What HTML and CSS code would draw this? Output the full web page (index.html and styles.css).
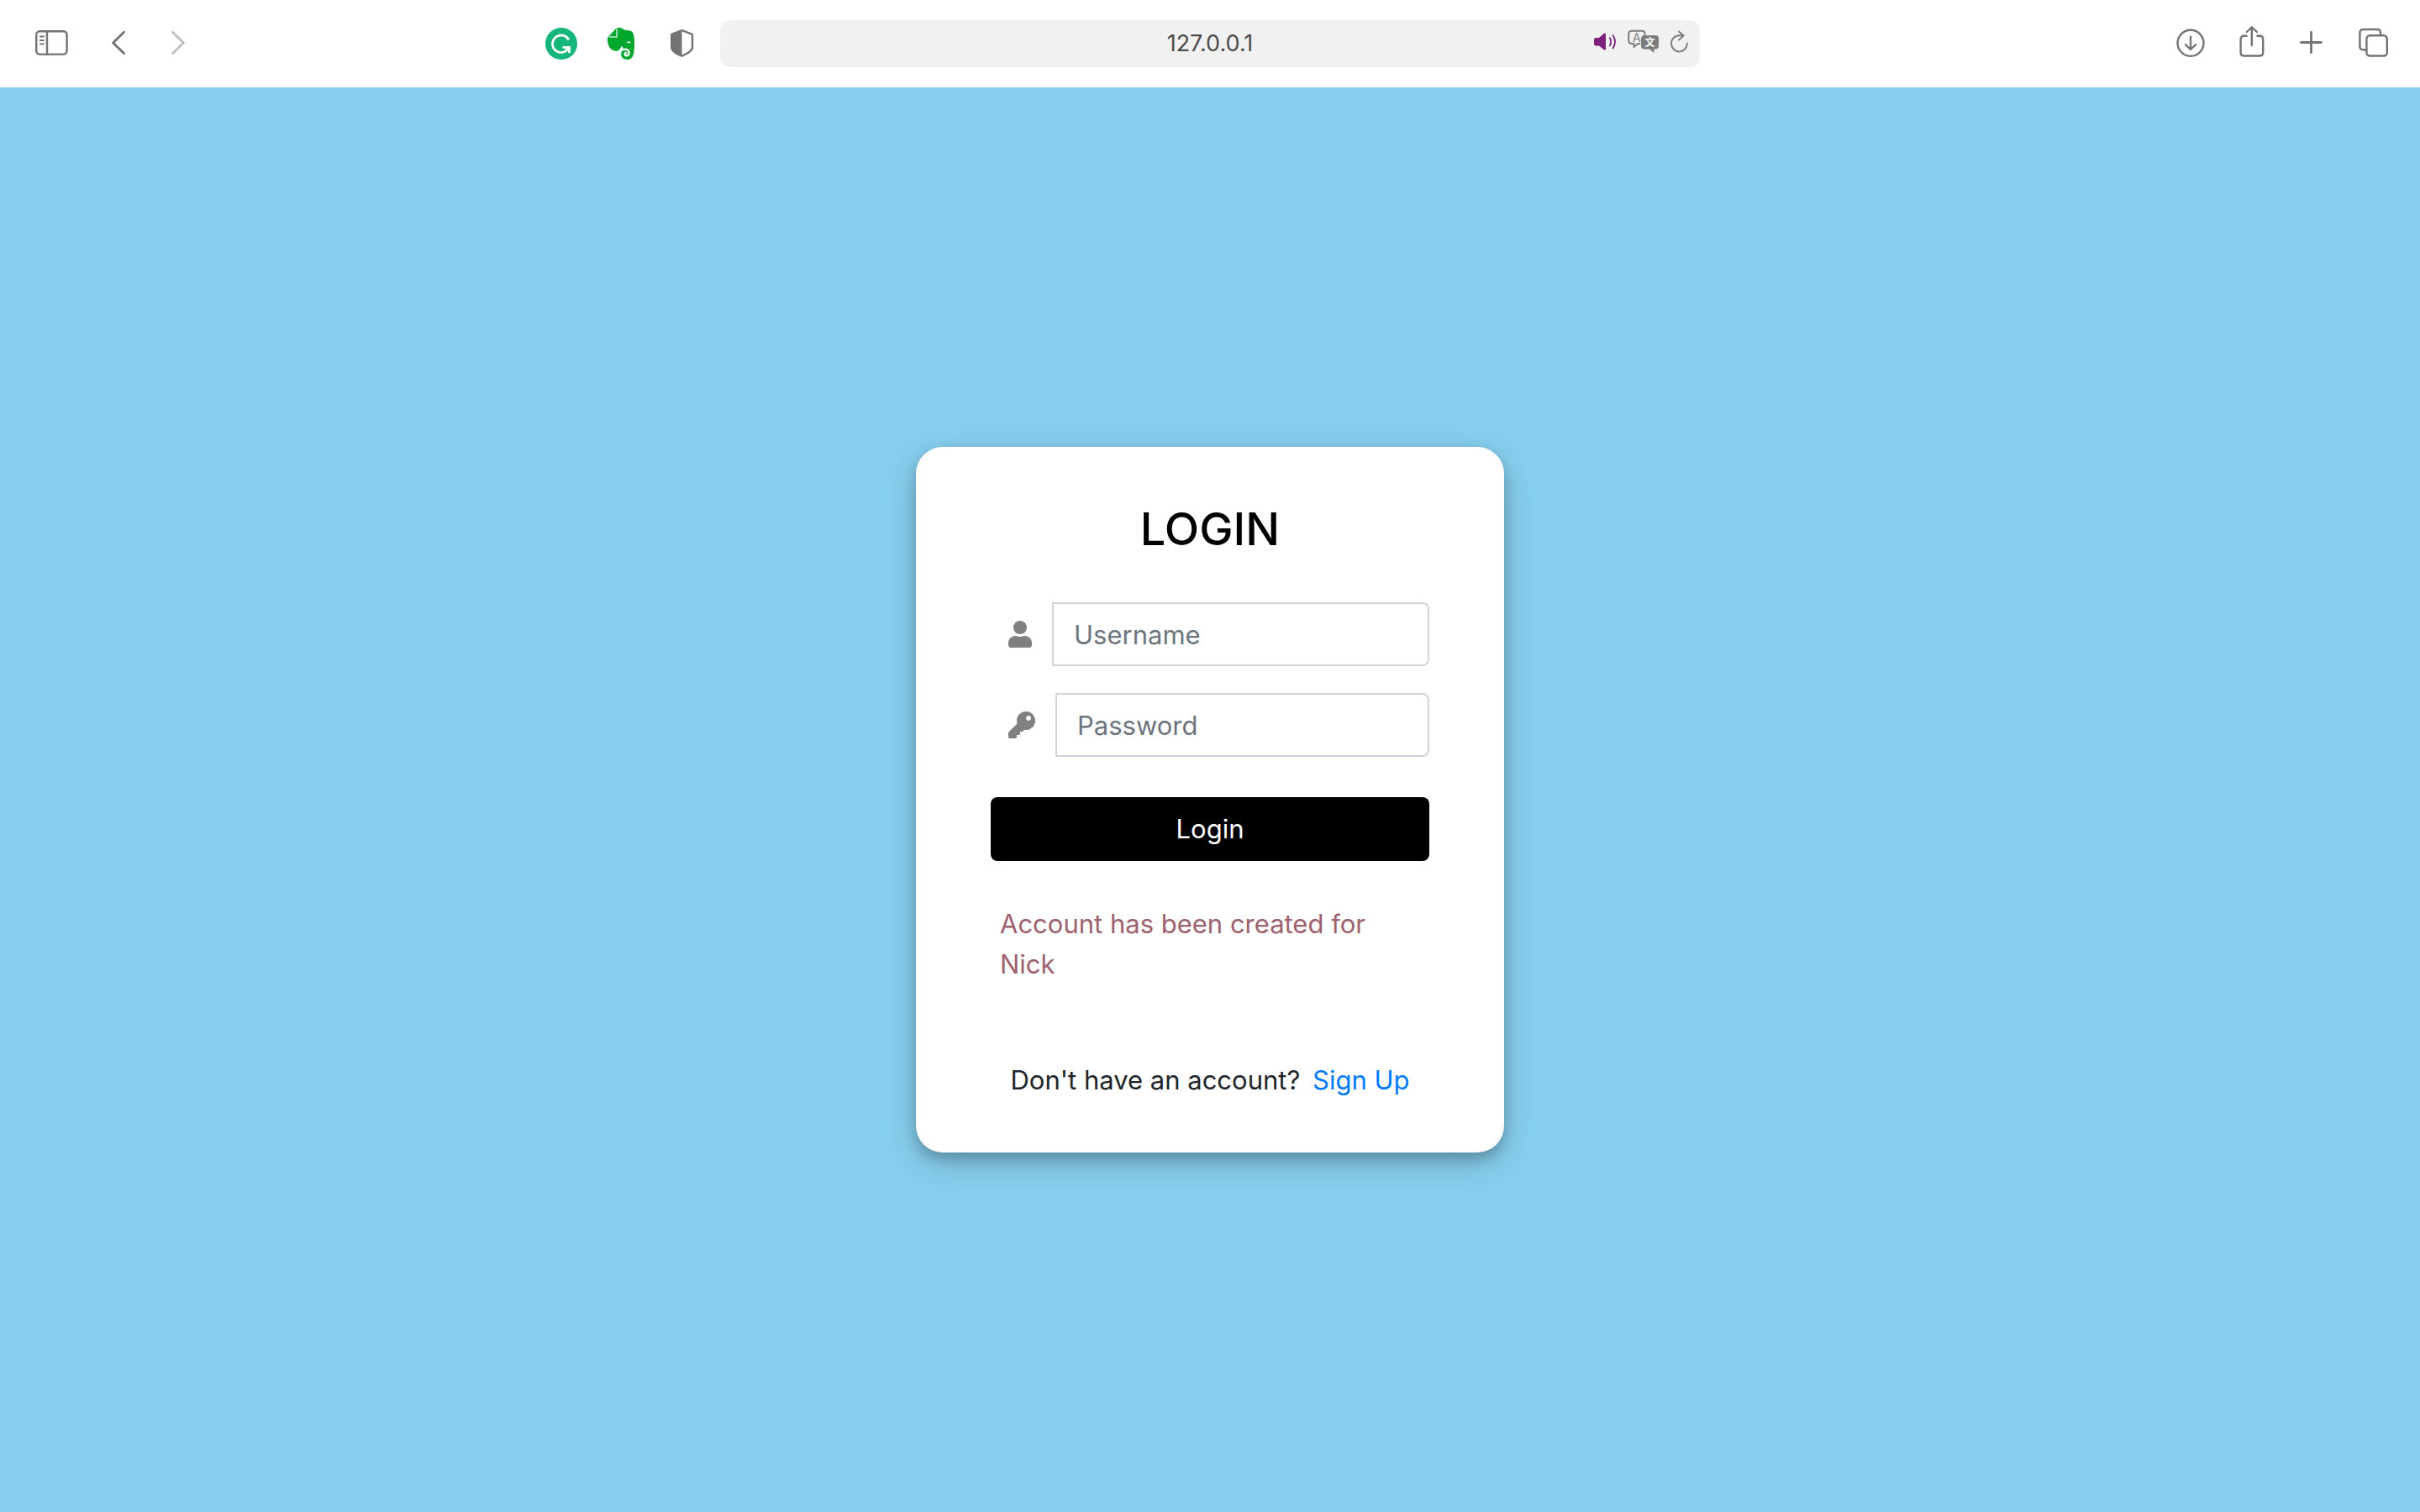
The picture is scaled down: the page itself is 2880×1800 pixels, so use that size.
FILE: index.html
```html
<!DOCTYPE html>
<html lang="en">
<head>
<meta charset="utf-8">
<meta name="viewport" content="width=device-width, initial-scale=1">
<title>Login</title>
<link rel="stylesheet" href="styles.css">
</head>
<body>
<header class="toolbar">
  <div class="toolbar-left">
    <div class="nav-tools">
      <button class="tool" type="button" aria-label="Show sidebar">
        <svg width="40" height="44" viewBox="0 0 40 44" fill="none" stroke="currentColor" stroke-width="2.4" stroke-linecap="round"><rect x="1.2" y="7.2" width="36.4" height="27.4" rx="4"/><path d="M14 7.500V34.500"/><path d="M5.800 13.500H10M5.800 18H10M5.800 22.300H10" stroke-width="1.800"/></svg>
      </button>
      <button class="tool" type="button" aria-label="Back">
        <svg width="20" height="44" viewBox="0 0 20 44" fill="none" stroke="currentColor" stroke-width="2.800" stroke-linecap="round" stroke-linejoin="round"><path d="M15.500 8.200L2.600 21L15.500 33.500"/></svg>
      </button>
      <button class="tool tool-off" type="button" aria-label="Forward" disabled>
        <svg width="20" height="44" viewBox="0 0 20 44" fill="none" stroke="currentColor" stroke-width="2.800" stroke-linecap="round" stroke-linejoin="round"><path d="M3.500 8.200L16.400 21L3.500 33.500"/></svg>
      </button>
    </div>
    <div class="extension-tools">
      <button class="tool" type="button" aria-label="Grammarly">
        <svg width="38" height="44" viewBox="0 0 38 44" fill="none" stroke="#fff" stroke-width="2.800"><circle cx="19" cy="22" r="19" fill="#15b67a" stroke="none"/><path d="M27.800 17.500A10.200 10.200 0 1 0 28 26.500" /><path d="M20.500 26.300H28.500V33" /><path d="M28.500 26.300L24 30.500" /></svg>
      </button>
      <button class="tool" type="button" aria-label="Evernote">
        <svg width="36" height="44" viewBox="0 0 36 44"><path fill="#00a82d" d="M2 15L11.500 4.600C13 3 15.500 2.700 18 3.200C20 3.600 21 5.500 23 5.800C26 6.200 29 5.800 31.500 8C34 12 34.300 18 34 23C33.800 29 33.500 35 31.500 38C29 41.500 24 41.600 20.500 39.500C17.500 37.500 17.500 32.500 20 30L18 26.500C16.500 30 14 31.200 10.500 30.400C6 29.500 3.500 26 2.600 22C2 19 1.700 16.500 2 15Z"/><path fill="none" stroke="#fff" stroke-width="1.500" d="M4 14H13V4.500" opacity=".8"/><path fill="none" stroke="#fff" stroke-width="2.400" stroke-linecap="round" d="M19 26.500C19 29.500 21.500 29 24 28.600C28.500 29 28.600 35.500 25 36.300C22.500 36.500 21.600 33.500 23.800 32.800"/><path fill="#fff" d="M25 20.800C25.200 18.600 29.200 18.600 29.800 21.600Z"/></svg>
      </button>
      <button class="tool" type="button" aria-label="Privacy report">
        <svg width="40" height="44" viewBox="0 0 40 44"><path fill="none" stroke="currentColor" stroke-width="2.400" stroke-linejoin="round" d="M20.500 6.200L33 10.800V26C33 31 27 33.500 20.500 36.700C14 33.500 8.200 31 8.200 26V10.800Z"/><path fill="currentColor" d="M20.500 6.200V36.700C14 33.500 8.200 31 8.200 26V10.800Z"/></svg>
      </button>
    </div>
  </div>
  <div class="address-bar">
    <input class="address" type="text" aria-label="Address" value="127.0.0.1">
    <div class="address-tools">
      <button class="tool tool-audio" type="button" aria-label="Mute tab">
        <svg width="26" height="44" viewBox="0 0 26 44"><path fill="currentColor" d="M2.200 15H6L11.800 9.800Q14 8.600 14 11V28Q14 30.400 11.800 29.200L6 24.500H2.200Q0 24.500 0 22.300V17.200Q0 15 2.200 15Z"/><path fill="none" stroke="currentColor" stroke-width="1.800" stroke-linecap="round" d="M18.800 15.200Q21.400 19.700 18.800 24.200M22.600 12Q27.400 19.700 22.600 27.400"/></svg>
      </button>
      <button class="tool tool-light" type="button" aria-label="Translate">
        <svg width="37" height="44" viewBox="0 0 37 44"><path fill="none" stroke="currentColor" stroke-width="2" stroke-linejoin="round" d="M15 22H12.500L7.500 26V22H5.500Q1.200 22 1.200 17.500V11.200Q1.200 6.800 5.500 6.800H16.500Q20.600 6.800 20.600 11.200V12"/><text class="glyph-latin" x="6" y="19.500">A</text><path fill="currentColor" d="M20 12H33Q37 12 37 16V24.500Q37 28.500 33 28.500H31.500V33L26 28.500H20Q16 28.500 16 24.500V16Q16 12 20 12Z"/><text class="glyph-han" x="20.500" y="25">文</text></svg>
      </button>
      <button class="tool tool-light" type="button" aria-label="Reload">
        <svg width="21" height="44" viewBox="0 0 21 44" fill="none" stroke="currentColor" stroke-width="2" stroke-linecap="round" stroke-linejoin="round"><path d="M19.800 21.500A9.400 9.600 0 1 1 10.400 12.200H15.500"/><path d="M10 7.500L15.500 12.400L10 17.500"/></svg>
      </button>
    </div>
  </div>
  <div class="toolbar-right">
    <button class="tool" type="button" aria-label="Downloads">
      <svg width="36" height="44" viewBox="0 0 36 44" fill="none" stroke="currentColor" stroke-width="2.400" stroke-linecap="round" stroke-linejoin="round"><circle cx="17" cy="21.300" r="15.500"/><path d="M17 13.800V29M11 23.200L17 29L23 23.200"/></svg>
    </button>
    <button class="tool" type="button" aria-label="Share">
      <svg width="36" height="44" viewBox="0 0 36 44" fill="none" stroke="currentColor" stroke-width="2.400" stroke-linecap="round" stroke-linejoin="round"><path d="M12.500 12.800H8.500Q4.600 12.800 4.600 16.800V32.500Q4.600 36.500 8.500 36.500H27.200Q31.200 36.500 31.200 32.500V16.800Q31.200 12.800 27.200 12.800H23.500" stroke-linecap="butt"/><path d="M17.800 24V2.500M11.800 8L17.800 2.300L23.800 8"/></svg>
    </button>
    <button class="tool" type="button" aria-label="New tab">
      <svg width="36" height="44" viewBox="0 0 36 44" fill="none" stroke="currentColor" stroke-width="2.800" stroke-linecap="round"><path d="M4.500 20.500H28.500M16.500 8.500V32.500"/></svg>
    </button>
    <button class="tool" type="button" aria-label="Tab overview">
      <svg width="36" height="44" viewBox="0 0 36 44" fill="none" stroke="currentColor" stroke-width="2.400"><rect x="10.400" y="12.300" width="24.400" height="24.200" rx="4"/><path d="M10 29.300H6.500Q2.400 29.300 2.400 25.300V9Q2.400 5 6.500 5H23Q27 5 27 9V12"/></svg>
    </button>
  </div>
</header>
<main class="page">
  <section class="card">
    <h1 class="title">LOGIN</h1>
    <form class="login-form">
      <div class="field">
        <label class="field-icon" for="username" aria-label="Username">
          <svg width="28" height="32" viewBox="0 0 448 512" fill="currentColor"><path d="M224 256c70.700 0 128-57.300 128-128S294.700 0 224 0 96 57.300 96 128s57.300 128 128 128zm89.600 32h-16.700c-22.200 10.200-46.900 16-72.900 16s-50.600-5.800-72.900-16h-16.700C60.200 288 0 348.200 0 422.400V464c0 26.500 21.500 48 48 48h352c26.500 0 48-21.500 48-48v-41.600c0-74.200-60.200-134.400-134.400-134.400z"/></svg>
        </label>
        <input class="field-input" id="username" type="text" placeholder="Username">
      </div>
      <div class="field">
        <label class="field-icon" for="password" aria-label="Password">
          <svg width="32" height="32" viewBox="0 0 512 512" fill="currentColor"><path d="M512 176.001C512 273.203 433.202 352 336 352c-11.220 0-22.190-1.062-32.827-3.069l-24.012 27.014A23.999 23.999 0 0 1 261.223 384H224v40c0 13.255-10.745 24-24 24h-40v40c0 13.255-10.745 24-24 24H24c-13.255 0-24-10.745-24-24v-78.059c0-6.365 2.529-12.470 7.029-16.971l161.802-161.802C163.108 213.814 160 195.271 160 176 160 78.798 238.797.001 335.999 0 433.488-.001 512 78.511 512 176.001zM336 128c0 26.510 21.490 48 48 48s48-21.490 48-48-21.490-48-48-48-48 21.490-48 48z"/></svg>
        </label>
        <input class="field-input" id="password" type="password" placeholder="Password">
      </div>
      <button class="submit" type="submit">Login</button>
    </form>
    <p class="message">Account has been created for Nick</p>
    <p class="signup">Don't have an account? <a class="signup-link" href="#signup">Sign Up</a></p>
  </section>
</main>
</body>
</html>
```
FILE: styles.css
```css
* {
  box-sizing: border-box;
}

body {
  display: flex;
  flex-direction: column;
  min-height: 100vh;
  margin: 0;
  background: #87cfef;
  color: #212529;
  font-family: Inter, "Liberation Sans", sans-serif;
  font-size: 31px;
  line-height: 48px;
}

button,
input {
  margin: 0;
  font: inherit;
}

/* Browser toolbar */

.toolbar {
  display: grid;
  grid-template-columns: 1fr minmax(400px, 1166px) 1fr;
  align-items: center;
  padding: 24px 0;
  background: #fff;
}

.toolbar-left {
  display: flex;
  justify-content: space-between;
  padding: 0 26px 0 42px;
}

.nav-tools {
  display: flex;
  gap: 50px;
}

.extension-tools {
  display: flex;
  gap: 34px;
}

.toolbar-right {
  display: flex;
  justify-content: flex-end;
  gap: 36px;
  padding-right: 38px;
}

.tool {
  display: flex;
  padding: 0;
  border: 0;
  background: none;
  color: #737373;
}

.tool-off {
  color: #bfbfbf;
}

.tool-audio {
  color: #7b217b;
}

.tool-light {
  color: #7d7d7d;
}

.address-bar {
  display: grid;
  grid-template-columns: 128px 1fr 128px;
  align-items: center;
  height: 56px;
  border-radius: 12px;
  background: #f1f1f1;
}

.address {
  grid-column: 2;
  min-width: 0;
  padding: 0;
  border: 0;
  background: none;
  color: #4c4c4c;
  font-size: 27px;
  line-height: 32px;
  text-align: center;
}

.address-tools {
  display: flex;
  justify-content: flex-end;
  gap: 14px;
  padding-right: 14px;
}

.glyph-latin {
  fill: currentColor;
  font-family: Inter, sans-serif;
  font-size: 14px;
}

.glyph-han {
  fill: #fff;
  font-family: "Noto Sans CJK SC", sans-serif;
  font-size: 12px;
  font-weight: 700;
}

/* Login card */

.page {
  display: flex;
  flex: 1;
  align-items: center;
  justify-content: center;
}

.card {
  width: 700px;
  padding: 64px 89px 62px;
  border-radius: 32px;
  background: #fff;
  box-shadow: 0 8px 16px rgba(0, 0, 0, 0.2), 0 12px 40px rgba(0, 0, 0, 0.19);
}

.title {
  margin: 0 0 53px;
  color: #000;
  font-size: 54px;
  font-weight: 500;
  line-height: 68px;
  text-align: center;
}

.login-form {
  display: flex;
  flex-direction: column;
  gap: 32px;
}

.field {
  display: flex;
}

.field-icon {
  display: flex;
  align-items: center;
  padding: 0 24px 0 21px;
  color: #808080;
}

.field-input {
  flex: 1;
  min-width: 0;
  height: 76px;
  padding: 12px 24px;
  border: 2px solid #ced4da;
  border-radius: 0 8px 8px 0;
  background: #fff;
  color: #495057;
}

.field-input::placeholder {
  color: #6c757d;
  opacity: 1;
}

.submit {
  height: 76px;
  margin-top: 16px;
  border: 0;
  border-radius: 8px;
  background: #000;
  color: #fff;
}

.message {
  margin: 51px 0 90px;
  padding: 0 11px;
  color: #9c616d;
}

.signup {
  margin: 0;
  text-align: center;
}

.signup-link {
  margin-left: 6px;
  color: #007bff;
  text-decoration: none;
}
```
